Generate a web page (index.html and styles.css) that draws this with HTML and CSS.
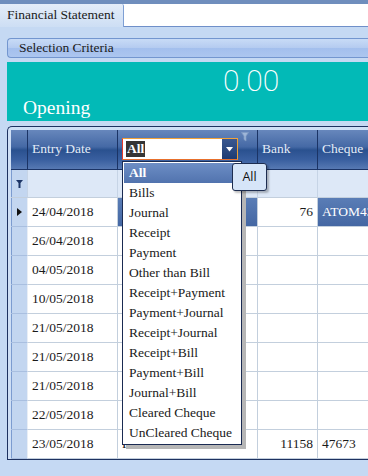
FILE: index.html
```html
<!DOCTYPE html>
<html>
<head>
    <title>Financial Statement</title>
    <link rel="stylesheet" href="styles.css">
</head>
<body>
    <div class="topbar"></div>
    <div class="tabstrip">
        <div class="tab">Financial Statement</div>
    </div>

    <div class="panel">
        <div class="criteria">Selection Criteria</div>

        <div class="summary">
            <div class="amount">0.00</div>
            <div class="caption">Opening</div>
        </div>

        <div class="grid">
            <!-- Column headers -->
            <div class="row head">
                <div class="cell ind"></div>
                <div class="cell">Entry Date</div>
                <div class="cell typecol">
                    <div class="combo">
                        <span class="sel">All</span>
                        <span class="combo-btn">
                            <svg width="7" height="5" viewBox="0 0 7 5"><path d="M0 0h7L3.5 4.5z" fill="#fff"/></svg>
                        </span>
                    </div>
                    <svg class="head-funnel" width="8" height="10" viewBox="0 0 8 10">
                        <path d="M0.5 0.5h7L5 4v5l-2-1.5V4z" fill="#9fb6d8" stroke="#7f9bc4" stroke-width="0.8"/>
                    </svg>

                    <!-- Drop-down list of entry types -->
                    <div class="droplist">
                        <div class="item active">All</div>
                        <div class="item">Bills</div>
                        <div class="item">Journal</div>
                        <div class="item">Receipt</div>
                        <div class="item">Payment</div>
                        <div class="item">Other than Bill</div>
                        <div class="item">Receipt+Payment</div>
                        <div class="item">Payment+Journal</div>
                        <div class="item">Receipt+Journal</div>
                        <div class="item">Receipt+Bill</div>
                        <div class="item">Payment+Bill</div>
                        <div class="item">Journal+Bill</div>
                        <div class="item">Cleared Cheque</div>
                        <div class="item">UnCleared Cheque</div>
                    </div>
                    <div class="tip">All</div>
                </div>
                <div class="cell">Bank</div>
                <div class="cell">Cheque</div>
            </div>

            <!-- Filter row -->
            <div class="row filter">
                <div class="cell ind">
                    <svg width="7" height="8" viewBox="0 0 7 8"><path d="M0 0h7L4.5 3v5h-2V3z" fill="#1d3566"/></svg>
                </div>
                <div class="cell"></div>
                <div class="cell"></div>
                <div class="cell"></div>
                <div class="cell"></div>
            </div>

            <div class="row current">
                <div class="cell ind">
                    <svg width="5" height="8" viewBox="0 0 5 8"><path d="M0 0l5 4-5 4z" fill="#111"/></svg>
                </div>
                <div class="cell">24/04/2018</div>
                <div class="cell hl"></div>
                <div class="cell edit num">76</div>
                <div class="cell hl">ATOM43</div>
            </div>
            <div class="row">
                <div class="cell ind"></div>
                <div class="cell">26/04/2018</div>
                <div class="cell"></div><div class="cell"></div><div class="cell"></div>
            </div>
            <div class="row">
                <div class="cell ind"></div>
                <div class="cell">04/05/2018</div>
                <div class="cell"></div><div class="cell"></div><div class="cell"></div>
            </div>
            <div class="row">
                <div class="cell ind"></div>
                <div class="cell">10/05/2018</div>
                <div class="cell"></div><div class="cell"></div><div class="cell"></div>
            </div>
            <div class="row">
                <div class="cell ind"></div>
                <div class="cell">21/05/2018</div>
                <div class="cell"></div><div class="cell"></div><div class="cell"></div>
            </div>
            <div class="row">
                <div class="cell ind"></div>
                <div class="cell">21/05/2018</div>
                <div class="cell"></div><div class="cell"></div><div class="cell"></div>
            </div>
            <div class="row">
                <div class="cell ind"></div>
                <div class="cell">21/05/2018</div>
                <div class="cell"></div><div class="cell"></div><div class="cell"></div>
            </div>
            <div class="row">
                <div class="cell ind"></div>
                <div class="cell">22/05/2018</div>
                <div class="cell low">N/NN/094/5040</div>
                <div class="cell"></div><div class="cell"></div>
            </div>
            <div class="row">
                <div class="cell ind"></div>
                <div class="cell">23/05/2018</div>
                <div class="cell">PYINTPY0044469</div>
                <div class="cell num">11158</div>
                <div class="cell">47673</div>
            </div>
        </div>
    </div>
</body>
</html>
```

FILE: styles.css
```css
* {
    box-sizing: border-box;
}

html, body {
    margin: 0;
    padding: 0;
    overflow: hidden;
}

body {
    width: 368px;
    height: 476px;
    background: #c5d9f3;
    font-family: "Liberation Serif", "Times New Roman", serif;
    font-size: 13.5px;
    color: #1a1a1a;
}

/* Window title strip and tab */
.topbar {
    height: 4px;
    background: #6f8ebd;
}

.tabstrip {
    display: flex;
    height: 23px;
    background: #fff;
    border-bottom: 1px solid #6f8fc9;
}

.tab {
    width: 124px;
    height: 23px;
    padding: 3px 0 0 7px;
    background: linear-gradient(#e4edf9, #cddef4);
    border-right: 1px solid #7e9fd4;
    border-top-right-radius: 2px;
    white-space: nowrap;
}

/* Main panel */
.panel {
    width: 520px;
    padding: 11px 0 0 7px;
}

.criteria {
    height: 20px;
    padding-left: 11px;
    line-height: 18px;
    border: 1px solid #7396cf;
    border-right: none;
    border-radius: 4px 0 0 4px;
    background: linear-gradient(#c8dbf6, #b4cbf0 50%, #a3bfed 51%, #acc6ef);
    margin-bottom: 4px;
}

.summary {
    height: 59px;
    background: #02bab7;
    color: #fff;
    margin-bottom: 5px;
}

.amount {
    padding: 2px 0 0 216px;
    font-family: "DejaVu Sans ExtraLight", Roboto, sans-serif;
    font-weight: 200;
    font-size: 30px;
    line-height: 34px;
}

.caption {
    padding-left: 16px;
    font-size: 19.5px;
    line-height: 20px;
}

/* Data grid */
.grid {
    border: 1px solid #1e3260;
    border-right: none;
    border-radius: 5px 0 0 0;
    padding: 3px 0 0 3px;
    background: #cfdff5;
}

.row {
    display: grid;
    grid-template-columns: 17px 90px 140px 60px 80px;
    height: 29px;
    background: #fff;
}

.cell {
    border-right: 1px solid #c3cfdd;
    border-bottom: 1px solid #c3cfdd;
    padding: 0 4px;
    line-height: 28px;
    white-space: nowrap;
    overflow: hidden;
}

.cell.low {
    line-height: 32px;
}

.cell.ind {
    padding: 0;
    display: flex;
    align-items: center;
    justify-content: center;
    background: linear-gradient(to right, #7c9cd0 0 1px, #c3d6f0 1px);
    border-right-color: #e8eef6;
    border-bottom-color: #a9bfe0;
}

.cell.num {
    text-align: right;
}

/* Header */
.row.head {
    position: relative;
    z-index: 2;
    height: 40px;
    background: linear-gradient(#6787bc 0%, #4569a5 42%, #2a518f 50%, #3a60a0 75%, #5a7cb5 100%);
    color: #e4ecf7;
}

.head .cell {
    line-height: 38px;
    border-right-color: #1b3466;
    border-bottom-color: #1b3466;
    overflow: visible;
}

.head .cell.ind {
    background: none;
}

.typecol {
    position: relative;
}

.combo {
    position: absolute;
    left: 4px;
    top: 8px;
    width: 116px;
    height: 22px;
    background: #fff;
    border: 1px solid;
    border-color: #f2a23a #eda034 #e8702c #e23a2a;
    line-height: 18px;
    padding: 1px 0 0 3px;
}

.sel {
    display: inline-block;
    background: #353535;
    color: #fff;
    font-weight: bold;
    line-height: 16px;
    padding: 0 1px;
}

.combo-btn {
    position: absolute;
    right: 0;
    top: 0;
    width: 15px;
    height: 20px;
    display: flex;
    align-items: center;
    justify-content: center;
    background: linear-gradient(#3a5890, #1e3b72);
}

.head-funnel {
    position: absolute;
    left: 123px;
    top: 2px;
}

.droplist {
    position: absolute;
    left: 4px;
    top: 31px;
    width: 120px;
    padding: 1px 0;
    background: #fff;
    border: 1px solid #1a2b52;
    box-shadow: 4px 4px 0 #b6b6b6;
    color: #1a1a1a;
}

.item {
    height: 20px;
    line-height: 20px;
    padding-left: 6px;
}

.item.active {
    margin: 0 1px;
    padding-left: 5px;
    background: linear-gradient(#6d8ec5, #5173ae);
    color: #fff;
    font-weight: bold;
}

.tip {
    position: absolute;
    left: 114px;
    top: 33px;
    width: 35px;
    height: 28px;
    background: #d6e5f8;
    border: 1px solid #1d2d50;
    border-radius: 3px;
    box-shadow: 2px 2px 2px rgba(0, 0, 0, 0.25);
    color: #111;
    font-family: "Open Sans", "Noto Sans", sans-serif;
    font-size: 12.5px;
    line-height: 26px;
    text-align: center;
}

/* Filter row */
.row.filter {
    height: 28px;
    background: #dde8f7;
}

.filter .cell {
    border-right-color: #c6d4e6;
    border-bottom-color: #c3cfdd;
}

/* Current row */
.current .hl {
    background: linear-gradient(#5a7db6, #4467a3);
    color: #fff;
}

.current .edit {
    background: #fff;
}
```
